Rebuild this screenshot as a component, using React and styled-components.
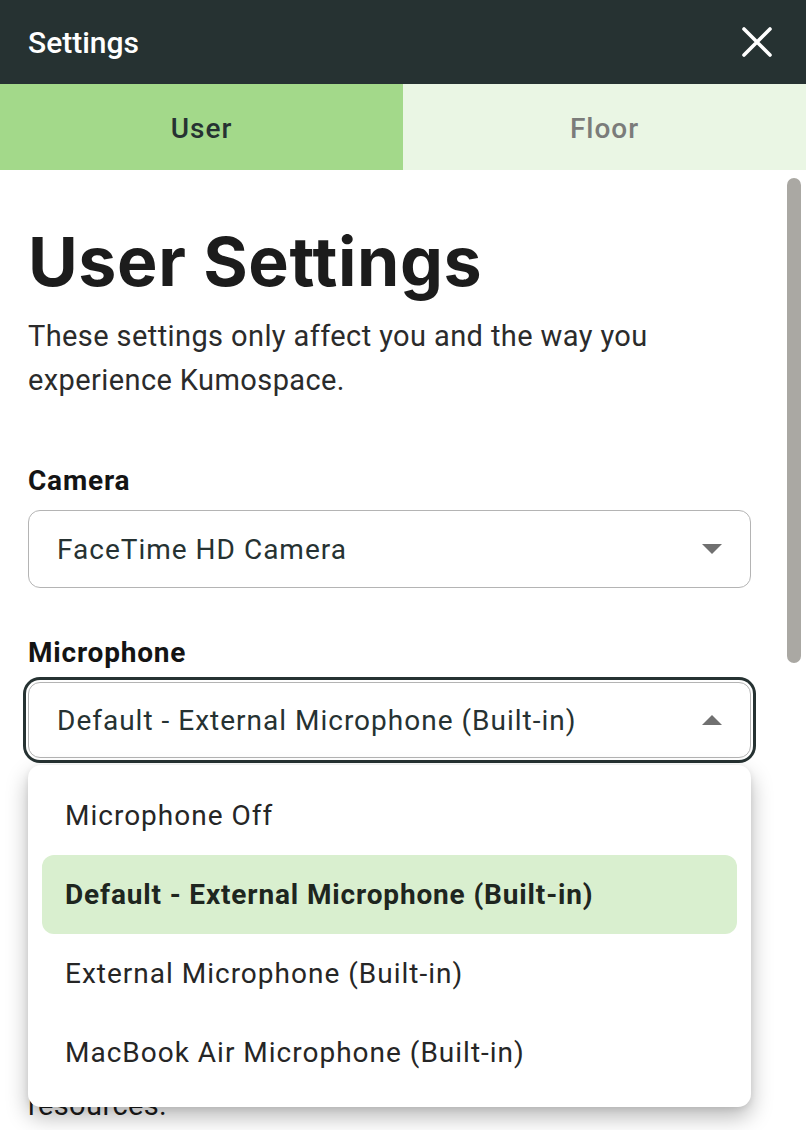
import React from "react";
import styled, { createGlobalStyle } from "styled-components";

const Global = createGlobalStyle`
  html, body { margin: 0; padding: 0; background: #ffffff; }
  body { width: 806px; height: 1130px; overflow: hidden; font-family: Roboto, "Liberation Sans", sans-serif; }
  * { box-sizing: border-box; }
`;

const Panel = styled.div`
  width: 806px;
  height: 1130px;
  display: flex;
  flex-direction: column;
  background: #ffffff;
  overflow: hidden;
`;

const Header = styled.header`
  height: 84px;
  flex: none;
  background: #263232;
  display: flex;
  align-items: center;
  justify-content: space-between;
  padding: 0 33px 0 28px;
`;

const HeaderTitle = styled.h1`
  margin: 0;
  color: #ffffff;
  font-family: Roboto, sans-serif;
  font-weight: 500;
  font-size: 30px;
  letter-spacing: 0;
`;

const CloseButton = styled.button`
  border: 0;
  padding: 0;
  background: transparent;
  width: 32px;
  height: 32px;
  display: flex;
  align-items: center;
  justify-content: center;
  cursor: pointer;
`;

const Tabs = styled.nav`
  display: grid;
  grid-template-columns: 403px 403px;
  height: 86px;
  flex: none;
`;

const Tab = styled.div`
  display: flex;
  align-items: center;
  justify-content: center;
  font-family: Roboto, sans-serif;
  font-weight: 500;
  font-size: 28px;
  letter-spacing: 1px;
  padding-top: 2px;
  background: ${(p) => (p.$active ? "#a3d98a" : "#eaf6e4")};
  color: ${(p) => (p.$active ? "#263232" : "#7b7c7a")};
`;

const Body = styled.main`
  flex: 1;
  position: relative;
  overflow: hidden;
`;

const Content = styled.div`
  padding: 50px 55px 0 28px;
  display: flex;
  flex-direction: column;
`;

const Title = styled.h2`
  margin: 0;
  font-family: Inter, sans-serif;
  font-weight: 700;
  font-size: 68px;
  line-height: 82px;
  letter-spacing: 0.6px;
  color: #1c1c1c;
`;

const Description = styled.p`
  margin: 12px 0 0;
  font-family: Roboto, sans-serif;
  font-size: 29px;
  line-height: 44px;
  letter-spacing: 0.4px;
  color: #2b2b2b;
`;

const Field = styled.div`
  margin-top: ${(p) => p.$gap}px;
  display: flex;
  flex-direction: column;
`;

const Label = styled.label`
  font-family: Roboto, sans-serif;
  font-weight: 700;
  font-size: 28px;
  line-height: 32px;
  letter-spacing: 0.8px;
  color: #141414;
  margin-bottom: 13px;
`;

const SelectWrap = styled.div`
  position: relative;
`;

const SelectBox = styled.div`
  height: ${(p) => (p.$focused ? 76 : 78)}px;
  border: 1px solid #b4b4b4;
  border-radius: 12px;
  display: flex;
  align-items: center;
  justify-content: space-between;
  padding: 0 28px 0 28px;
  font-family: Roboto, sans-serif;
  font-size: 28px;
  letter-spacing: 1px;
  color: #263232;
  background: #ffffff;
  box-shadow: ${(p) => (p.$focused ? "0 0 0 2px #ffffff, 0 0 0 5px #263232" : "none")};
`;

const Caret = styled.span`
  width: 0;
  height: 0;
  border-left: 10px solid transparent;
  border-right: 10px solid transparent;
  ${(p) => (p.$up ? "border-bottom: 10px solid #707070;" : "border-top: 10px solid #707070;")}
`;

const Menu = styled.ul`
  position: absolute;
  left: 0;
  right: 0;
  top: calc(100% + 7px);
  margin: 0;
  padding: 11px 14px 15px;
  list-style: none;
  background: #ffffff;
  border-radius: 13px;
  box-shadow: 0 10px 22px rgba(0, 0, 0, 0.28), 0 2px 6px rgba(0, 0, 0, 0.08);
  z-index: 10;
`;

const MenuItem = styled.li`
  height: 79px;
  display: flex;
  align-items: center;
  padding: 0 23px;
  border-radius: 12px;
  font-family: Roboto, sans-serif;
  font-size: 28px;
  letter-spacing: ${(p) => (p.$selected ? 0.85 : 1)}px;
  font-weight: ${(p) => (p.$selected ? 700 : 400)};
  color: ${(p) => (p.$selected ? "#1e261f" : "#262626")};
  background: ${(p) => (p.$selected ? "#d9efcf" : "transparent")};
`;

const Paragraph = styled.p`
  margin: 0;
  font-family: Roboto, sans-serif;
  font-size: 29px;
  line-height: 44px;
  letter-spacing: 0.4px;
  color: #1c1c1c;
`;

const ScrollThumb = styled.div`
  position: absolute;
  top: 8px;
  right: 5px;
  width: 14px;
  height: 485px;
  border-radius: 7px;
  background: #aaa8a3;
`;

const CloseIcon = () => (
  <svg width="30" height="30" viewBox="0 0 30 30" fill="none">
    <path d="M2 2 L28 28 M28 2 L2 28" stroke="#ffffff" strokeWidth="3.6" strokeLinecap="round" />
  </svg>
);

const micOptions = [
  "Microphone Off",
  "Default - External Microphone (Built-in)",
  "External Microphone (Built-in)",
  "MacBook Air Microphone (Built-in)",
];

export default function App() {
  return (
    <>
      <Global />
      <Panel>
        <Header>
          <HeaderTitle>Settings</HeaderTitle>
          <CloseButton aria-label="Close">
            <CloseIcon />
          </CloseButton>
        </Header>
        <Tabs>
          <Tab $active>User</Tab>
          <Tab>Floor</Tab>
        </Tabs>
        <Body>
          <Content>
            <Title>User Settings</Title>
            <Description>
              These settings only affect you and the way you experience Kumospace.
            </Description>

            <Field $gap={63}>
              <Label>Camera</Label>
              <SelectWrap>
                <SelectBox>
                  <span>FaceTime HD Camera</span>
                  <Caret />
                </SelectBox>
              </SelectWrap>
            </Field>

            <Field $gap={49}>
              <Label>Microphone</Label>
              <SelectWrap>
                <SelectBox $focused>
                  <span>Default - External Microphone (Built-in)</span>
                  <Caret $up />
                </SelectBox>
                <Menu>
                  {micOptions.map((o, i) => (
                    <MenuItem key={o} $selected={i === 1}>
                      {o}
                    </MenuItem>
                  ))}
                </Menu>
              </SelectWrap>
            </Field>

            <Field $gap={49}>
              <Label>Speaker</Label>
              <SelectWrap>
                <SelectBox>
                  <span>Default - External Headphones</span>
                  <Caret />
                </SelectBox>
              </SelectWrap>
            </Field>

            <Field $gap={64}>
              <Label>Low Bandwidth Mode</Label>
              <Paragraph>
                Turn off video to save bandwidth and computer
                <br />
                resources.
              </Paragraph>
            </Field>
          </Content>
          <ScrollThumb />
        </Body>
      </Panel>
    </>
  );
}
